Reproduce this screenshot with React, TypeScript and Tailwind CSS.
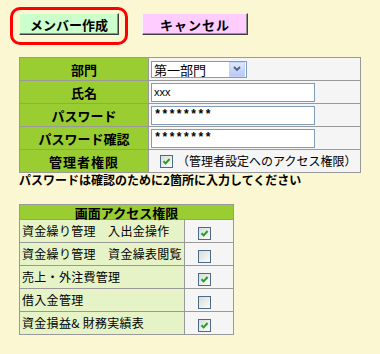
import React from 'react';

function Check({ checked }: { checked: boolean }) {
  return (
    <span className="inline-flex shrink-0 w-[13px] h-[13px] items-center justify-center border border-[#4a6a8a] bg-gradient-to-br from-[#dcdcd6] to-[#fbfbfb] align-middle">
      {checked && (
        <svg width="9" height="9" viewBox="0 0 9 9">
          <path d="M1.5 4.2 L3.6 6.4 L7.6 2" stroke="#22a022" strokeWidth="2" fill="none" />
        </svg>
      )}
    </span>
  );
}

const screens = [
  { name: '資金繰り管理　入出金操作', checked: true },
  { name: '資金繰り管理　資金繰表閲覧', checked: false },
  { name: '売上・外注費管理', checked: true },
  { name: '借入金管理', checked: false },
  { name: '資金損益& 財務実績表', checked: true },
];

const btn =
  'h-[22px] text-[13px] font-bold border border-t-[#f4f4f4] border-l-[#f4f4f4] border-r-[#404040] border-b-[#404040] shadow-[inset_-1px_-1px_0_#909090]';

export default function App() {
  const label = 'border border-[#999] bg-[#9acd32] text-center font-bold text-[13px] h-[23px] p-0';
  const value = 'border border-[#999] bg-[#f5f5f5] h-[23px] px-[2px] py-0';
  const input = 'block w-[164px] h-[19px] border border-[#7f9db9] bg-white px-[2px] outline-none';

  return (
    <div className="w-[380px] h-[354px] bg-[#faf7d2] pt-[7px] pl-[10px] text-black font-['Noto_Sans_CJK_JP',sans-serif] leading-none">
      <div className="flex items-start">
        <div className="border-[3px] border-[#f00] rounded-[10px] pt-[3px] pb-[7px] px-[6px]">
          <button className={`${btn} w-[100px] bg-[#ccffcc]`}>メンバー作成</button>
        </div>
        <button className={`${btn} ml-[14px] mt-[6px] w-[106px] bg-[#ffccff] tracking-[1px]`}>キャンセル</button>
      </div>

      <table className="ml-[9px] mt-[12px] border-collapse w-[342px] table-fixed">
        <tbody>
          <tr>
            <td className={`${label} w-[129px]`}>部門</td>
            <td className={value}>
              <div className="flex w-[96px] h-[17px] border border-[#7f9db9] bg-white items-center">
                <span className="flex-1 text-[13px] pl-[2px]">第一部門</span>
                <span className="w-[16px] h-[15px] mr-px bg-gradient-to-b from-[#dfe8fb] to-[#b6c9f3] border border-[#c3d3fd] flex items-center justify-center">
                  <svg width="8" height="6" viewBox="0 0 8 6">
                    <path d="M1 1 L4 4 L7 1" stroke="#4d6185" strokeWidth="1.8" fill="none" />
                  </svg>
                </span>
              </div>
            </td>
          </tr>
          <tr>
            <td className={label}>氏名</td>
            <td className={value}>
              <input className={`${input} text-[11px] font-['Liberation_Sans',sans-serif]`} defaultValue="xxx" />
            </td>
          </tr>
          <tr>
            <td className={label}>パスワード</td>
            <td className={value}>
              <input className={`${input} text-[12px] font-bold font-['Liberation_Mono',monospace]`} defaultValue="********" />
            </td>
          </tr>
          <tr>
            <td className={label}>パスワード確認</td>
            <td className={value}>
              <input className={`${input} text-[12px] font-bold font-['Liberation_Mono',monospace]`} defaultValue="********" />
            </td>
          </tr>
          <tr>
            <td className={`${label} tracking-[1px]`}>管理者権限</td>
            <td className={`${value} pl-[11px]`}>
              <div className="flex items-center gap-[4px] text-[12px] whitespace-nowrap">
                <Check checked />
                <span>（管理者設定へのアクセス権限）</span>
              </div>
            </td>
          </tr>
        </tbody>
      </table>

      <p className="ml-[9px] mt-[1px] text-[12px] font-bold">パスワードは確認のために2箇所に入力してください</p>

      <table className="ml-[9px] mt-[18px] border-collapse w-[215px]">
        <tbody>
          <tr>
            <td colSpan={2} className="border border-[#999] bg-[#9acd32] text-center font-bold text-[13px] h-[15px] p-0">
              画面アクセス権限
            </td>
          </tr>
          {screens.map((s) => (
            <tr key={s.name}>
              <td className="border border-[#999] bg-[#e5f3c6] text-[12px] tracking-[0.3px] h-[23px] w-[165px] px-[2px] py-0 whitespace-nowrap">
                {s.name}
              </td>
              <td className="border border-[#999] bg-[#f5f5f5] text-left h-[23px] w-[50px] py-0 pl-[13px]">
                <Check checked={s.checked} />
              </td>
            </tr>
          ))}
        </tbody>
      </table>
    </div>
  );
}
